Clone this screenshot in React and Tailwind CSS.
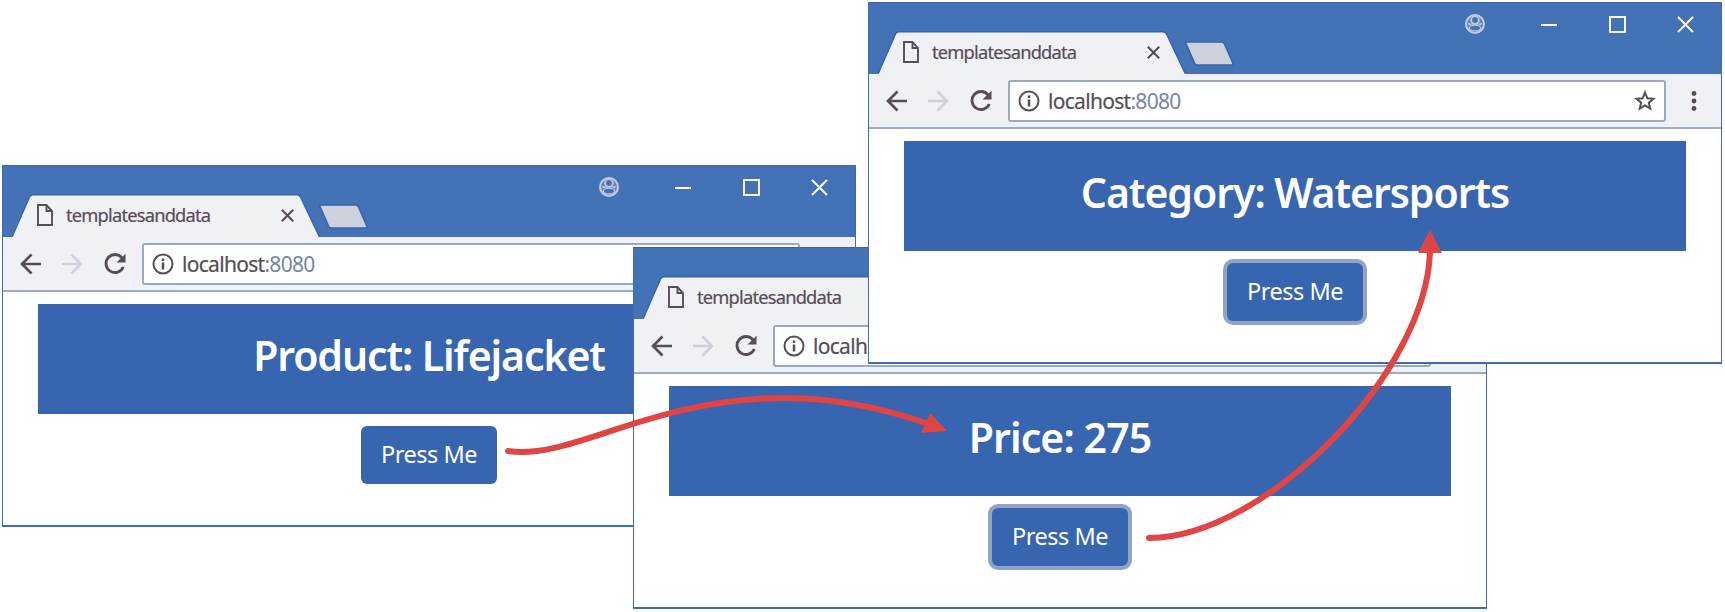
const ink = '#574d59';

function Tab() {
  return (
    <div className="relative mt-[28px] ml-[9px] h-[43px] w-[309px]">
      <svg className="absolute inset-0" width="309" height="43" viewBox="0 0 309 43">
        <path d="M0 43 L17.500 3 Q18.500 .8 21 .8 H285 Q287.500 .8 288.500 3 L307.500 43" fill="#f0f1f4" stroke="#3864ad" strokeWidth="1.500" />
      </svg>
      <div className="relative flex h-full items-center pb-px pl-[25px]">
        <svg width="16" height="22" viewBox="0 0 16 22" fill="none" stroke={ink} strokeWidth="1.900">
          <path d="M1 1 H9.500 L15 7 V21 H1 Z" />
          <path d="M9.500 1 V7 H15" />
        </svg>
        <span className="ml-[13px] w-[145px] whitespace-nowrap text-[18.300px] leading-[28px] tracking-[-0.8px] text-[#574d59] [-webkit-text-stroke:0.2px_#574d59]">templatesanddata</span>
        <svg className="ml-[70px]" width="13" height="13" viewBox="0 0 13 13" stroke={ink} strokeWidth="2.100">
          <path d="M.8 .8 L12.200 12.200 M12.200 .8 L.8 12.200" />
        </svg>
      </div>
    </div>
  );
}

function WindowControls() {
  return (
    <div className="mt-[10px] mr-[27px] ml-auto flex h-[22px] items-center">
      <svg width="22" height="22" viewBox="0 0 22 22">
        <circle cx="11" cy="11" r="10" fill="#c3cbdc" />
        <circle cx="11" cy="11" r="7.900" fill="#5b80bd" />
        <path d="M4 9.500 Q11 13 18 9.500 L17 12.500 Q11 9 5 12.500 Z" fill="#c3cbdc" />
        <circle cx="11" cy="7.200" r="4.700" fill="#c3cbdc" />
        <circle cx="11" cy="7" r="2.900" fill="#4472b7" />
        <ellipse cx="11" cy="15" rx="5.600" ry="2.900" fill="#4472b7" stroke="#c3cbdc" strokeWidth="1.200" />
      </svg>
      <svg className="ml-[55px]" width="16" height="16" viewBox="0 0 16 16" stroke="white" strokeWidth="2">
        <path d="M0 9 H16" />
      </svg>
      <svg className="ml-[52px]" width="17" height="17" viewBox="0 0 17 17" fill="none" stroke="white" strokeWidth="1.900">
        <rect x="1" y="1" width="15" height="15" />
      </svg>
      <svg className="ml-[51px]" width="17" height="17" viewBox="0 0 17 17" stroke="white" strokeWidth="1.900">
        <path d="M1 1 L16 16 M16 1 L1 16" />
      </svg>
    </div>
  );
}

function TitleBar() {
  return (
    <div className="flex h-[72px] items-start border-t border-[#3864ad] bg-[#4472b7]">
      <Tab />
      <svg className="mt-[37px] -ml-[4px]" width="52" height="27" viewBox="0 0 52 27">
        <path d="M2.500 2.500 Q2 2 3 2 H38.500 Q40.500 2 41.500 4 L50 23.500 Q50.500 25 49 25 H14.500 Q12.500 25 11.500 23 Z" fill="#cdd1de" stroke="#3864ad" strokeWidth="1.600" />
      </svg>
      <WindowControls />
    </div>
  );
}

function Toolbar() {
  return (
    <div className="flex h-[55px] items-center border-b-2 border-[#9cabc9] bg-[#f0f1f4] pl-[17px]">
      <svg width="21" height="22" viewBox="0 0 21 22" fill="none" stroke={ink} strokeWidth="2.700">
        <path d="M21 11 H2 M11.500 1.500 L2 11 L11.500 20.500" />
      </svg>
      <svg className="ml-[21px]" width="21" height="22" viewBox="0 0 21 22" fill="none" stroke="#cdd1de" strokeWidth="2.500">
        <path d="M0 11 H19 M9.500 1.500 L19 11 L9.500 20.500" />
      </svg>
      <svg className="ml-[21px]" width="22" height="22" viewBox="0 0 22 22" fill="none">
        <path d="M18 4.800 A9 9 0 1 0 19.300 14" stroke={ink} strokeWidth="2.800" />
        <path d="M21.500 .8 V9.500 H12.500 Z" fill={ink} />
      </svg>
      <div className="ml-[16px] flex h-[42px] w-[658px] items-center rounded-[3px] border-2 border-[#98a8c9] bg-white pr-[8px] pl-[8px]">
        <svg width="22" height="22" viewBox="0 0 22 22" fill="none" stroke={ink}>
          <circle cx="11" cy="11" r="9.500" strokeWidth="2" />
          <path d="M11 9.500 V16.500 M11 5.500 V8" strokeWidth="2.500" />
        </svg>
        <span className="ml-[8px] whitespace-nowrap text-[21px] leading-[28px] tracking-[-0.7px] text-[#574d59]">
          <span className="[-webkit-text-stroke:0.2px_#574d59]">localhost</span>
          <span className="text-[#7584a8]">:8080</span>
        </span>
        <svg className="ml-auto" width="22" height="22" viewBox="0 0 22 22" fill="none" stroke={ink} strokeWidth="2">
          <path d="M11 2.500 L13.300 8.200 L19.500 8.700 L14.800 12.700 L16.300 18.700 L11 15.500 L5.700 18.700 L7.200 12.700 L2.500 8.700 L8.700 8.200 Z" />
        </svg>
      </div>
      <svg className="ml-[25px]" width="6" height="22" viewBox="0 0 6 22" fill={ink}>
        <circle cx="3" cy="3.500" r="2.400" />
        <circle cx="3" cy="11" r="2.400" />
        <circle cx="3" cy="18.500" r="2.400" />
      </svg>
    </div>
  );
}

function BrowserWindow({ place, heading, headingStyle, focused }) {
  return (
    <section className={`absolute flex h-[362px] w-[854px] flex-col border border-t-0 border-b-2 border-[#3f6bb0] bg-white ${place}`}>
      <TitleBar />
      <Toolbar />
      <main className="flex flex-col items-center pt-[12px]">
        <h1 className={`flex h-[110px] w-[782px] items-center justify-center bg-[#3865af] pb-[6px] font-semibold whitespace-nowrap text-white ${headingStyle}`}>
          {heading}
        </h1>
        <button
          className={`mt-[12px] h-[58px] w-[136px] rounded-[6px] bg-[#3865af] text-[23.500px] tracking-[-0.5px] whitespace-nowrap text-white ${focused ? 'ring-[4px] ring-[#91a4c6]' : ''}`}
        >
          Press Me
        </button>
      </main>
    </section>
  );
}

export default function App() {
  return (
    <div className="relative h-[612px] w-[1725px] overflow-hidden bg-white font-['Noto_Sans','Open_Sans',sans-serif]">
      <BrowserWindow place="left-[2px] top-[165px]" heading="Product: Lifejacket" headingStyle="text-[41px] tracking-[-1.1px]" />
      <BrowserWindow place="left-[633px] top-[247px]" heading="Price: 275" headingStyle="text-[41px] tracking-[-0.9px]" focused />
      <BrowserWindow place="left-[868px] top-[2px]" heading="Category: Watersports" headingStyle="text-[41px] tracking-[-1.05px]" focused />
      <svg className="pointer-events-none absolute inset-0" width="1725" height="612" viewBox="0 0 1725 612" fill="none" stroke="#e04443" strokeWidth="6" strokeLinecap="round">
        <path d="M508 451 C570 461 650 398 785 398 C840 398 885 409 926 423" />
        <path d="M947 431 L930 413 L921 433 Z" fill="#e04443" stroke="none" />
        <path d="M1149 538 C1265 538 1428 372 1430 250" />
        <path d="M1430 230 L1442 253 L1418 253 Z" fill="#e04443" stroke="none" />
      </svg>
    </div>
  );
}
